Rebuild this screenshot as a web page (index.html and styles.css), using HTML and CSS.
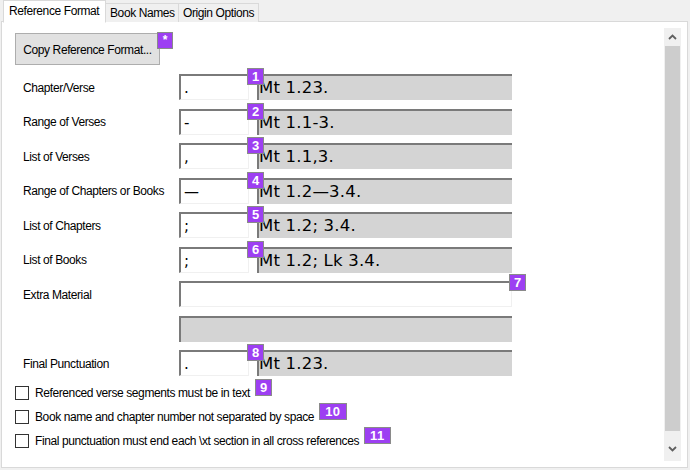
FILE: index.html
```html
<!DOCTYPE html>
<html>
<head>
<meta charset="utf-8">
<link rel="stylesheet" href="styles.css">
</head>
<body>
<div class="window">
  <div class="tabs">
    <div class="tab active">Reference Format</div>
    <div class="tab">Book Names</div>
    <div class="tab">Origin Options</div>
  </div>
  <div class="panel">
    <div class="content">
      <div class="btn-wrap">
        <div class="button">Copy Reference Format...</div>
        <span class="badge badge-star">*</span>
      </div>
      <div class="form">
        <div class="row">
          <div class="label">Chapter/Verse</div>
          <div class="field"><div class="input">.</div><span class="badge">1</span></div>
          <div class="preview">Mt 1.23.</div>
        </div>
        <div class="row">
          <div class="label">Range of Verses</div>
          <div class="field"><div class="input">-</div><span class="badge">2</span></div>
          <div class="preview">Mt 1.1-3.</div>
        </div>
        <div class="row">
          <div class="label">List of Verses</div>
          <div class="field"><div class="input">,</div><span class="badge">3</span></div>
          <div class="preview">Mt 1.1,3.</div>
        </div>
        <div class="row">
          <div class="label">Range of Chapters or Books</div>
          <div class="field"><div class="input">—</div><span class="badge">4</span></div>
          <div class="preview">Mt 1.2—3.4.</div>
        </div>
        <div class="row">
          <div class="label">List of Chapters</div>
          <div class="field"><div class="input">;</div><span class="badge">5</span></div>
          <div class="preview">Mt 1.2; 3.4.</div>
        </div>
        <div class="row">
          <div class="label">List of Books</div>
          <div class="field"><div class="input">;</div><span class="badge">6</span></div>
          <div class="preview">Mt 1.2; Lk 3.4.</div>
        </div>
        <div class="row">
          <div class="label">Extra Material</div>
          <div class="field wide"><div class="input"></div><span class="badge badge-right">7</span></div>
        </div>
        <div class="row">
          <div class="label"></div>
          <div class="preview wide"></div>
        </div>
        <div class="row">
          <div class="label">Final Punctuation</div>
          <div class="field"><div class="input">.</div><span class="badge">8</span></div>
          <div class="preview">Mt 1.23.</div>
        </div>
      </div>
      <div class="checks">
        <div class="check"><span class="box"></span><span class="ctext">Referenced verse segments must be in text</span><span class="badge inline">9</span></div>
        <div class="check"><span class="box"></span><span class="ctext">Book name and chapter number not separated by space</span><span class="badge inline two">10</span></div>
        <div class="check"><span class="box"></span><span class="ctext">Final punctuation must end each \xt section in all cross references</span><span class="badge inline two">11</span></div>
      </div>
    </div>
    <div class="scrollbar">
      <div class="arrow"><svg width="9" height="6" viewBox="0 0 9 6"><polyline points="1,5 4.5,1.5 8,5" fill="none" stroke="#5f5f5f" stroke-width="1.8"/></svg></div>
      <div class="thumb"></div>
      <div class="arrow down"><svg width="9" height="6" viewBox="0 0 9 6"><polyline points="1,1 4.5,4.5 8,1" fill="none" stroke="#5f5f5f" stroke-width="1.8"/></svg></div>
    </div>
  </div>
</div>
</body>
</html>
```
FILE: styles.css
```css
html, body {
  margin: 0;
  padding: 0;
  background: #f0f0f0;
}
body {
  width: 690px;
  height: 470px;
  overflow: hidden;
  font-family: "Liberation Sans", Arial, sans-serif;
  font-size: 12px;
  letter-spacing: -0.4px;
  color: #000;
}
.window {
  display: flex;
  flex-direction: column;
  height: 470px;
}
.tabs {
  display: flex;
  align-items: flex-end;
  height: 22px;
  padding-left: 3px;
  position: relative;
  z-index: 1;
}
.tab {
  box-sizing: border-box;
  height: 19px;
  line-height: 19px;
  padding: 0 0 0 4px;
  border: 1px solid #d9d9d9;
  border-bottom: none;
  background: #f0f0f0;
  white-space: nowrap;
  margin-left: -1px;
}
.tab.active {
  width: 103px;
  height: 23px;
  line-height: 20px;
  padding-left: 5px;
  margin-left: 0;
  margin-bottom: -1px;
  background: #fff;
  border-bottom: 1px solid #fff;
}
.tab:nth-child(2) { width: 74px; }
.tab:nth-child(3) { width: 81px; }
.panel {
  margin: -1px 2px 2px 1px;
  border: 1px solid #d9d9d9;
  background: #fff;
  flex: 1;
  display: flex;
  min-height: 0;
}
.content {
  flex: 1;
  padding: 11px 0 0 13px;
}
.btn-wrap {
  position: relative;
  width: 145px;
  height: 32px;
}
.button {
  box-sizing: border-box;
  width: 145px;
  height: 32px;
  background: #e1e1e1;
  border: 1px solid #adadad;
  display: flex;
  align-items: center;
  justify-content: center;
  padding-top: 1px;
}
.badge {
  position: absolute;
  box-sizing: border-box;
  height: 17px;
  min-width: 17px;
  padding: 0 3px;
  background: #9d3ff2;
  border: 1px solid #8a8a8a;
  color: #fff;
  font-weight: bold;
  font-size: 13px;
  letter-spacing: 0;
  line-height: 15px;
  text-align: center;
  z-index: 2;
}
.badge.two {
  padding: 0 5px;
  letter-spacing: 0.5px;
}
.badge-star {
  left: 142px;
  top: -1px;
  width: 16px;
  min-width: 16px;
  font-size: 12px;
}
.form {
  margin-top: 9px;
  display: flex;
  flex-direction: column;
  gap: 8.5px;
}
.row {
  display: flex;
  align-items: center;
  height: 26px;
}
.label {
  width: 164px;
  padding-left: 8px;
  box-sizing: border-box;
  flex: none;
  padding-top: 1px;
}
.field {
  position: relative;
  width: 70px;
  height: 26px;
  flex: none;
}
.field.wide {
  width: 333px;
}
.input {
  box-sizing: border-box;
  width: 100%;
  height: 26px;
  background: #fff;
  border-top: 2px solid #7a7a7a;
  border-left: 2px solid #7a7a7a;
  border-right: 1px solid #f0f0f0;
  border-bottom: 1px solid #f0f0f0;
  font-family: "DejaVu Sans", Verdana, sans-serif;
  font-size: 15px;
  letter-spacing: 0;
  padding: 2px 0 0 3px;
  line-height: 20px;
}
.field .badge {
  left: 68px;
  top: -6px;
}
.field .badge-right {
  left: 330px;
  top: -7px;
}
.preview {
  box-sizing: border-box;
  width: 255px;
  height: 26px;
  margin-left: 8px;
  flex: none;
  background: #d4d4d4;
  border-top: 2px solid #7a7a7a;
  border-left: 2px solid #7a7a7a;
  font-family: "DejaVu Sans", Verdana, sans-serif;
  font-size: 16.5px;
  letter-spacing: 0.2px;
  line-height: 24px;
  color: #000;
  white-space: nowrap;
}
.preview.wide {
  width: 333px;
  margin-left: 0;
}
.checks {
  margin-top: 5px;
  display: flex;
  flex-direction: column;
}
.check {
  display: flex;
  align-items: center;
  height: 24px;
  position: relative;
  letter-spacing: -0.4px;
}
.box {
  box-sizing: border-box;
  width: 14px;
  height: 14px;
  border: 1px solid #333;
  background: #fff;
  margin-right: 6px;
  flex: none;
}
.badge.inline {
  position: relative;
  top: -6px;
  margin-left: 5px;
}
.scrollbar {
  width: 17px;
  margin: 6px 6px 6px 0;
  background: #f0f0f0;
  display: flex;
  flex-direction: column;
}
.arrow {
  height: 18px;
  display: flex;
  align-items: center;
  justify-content: center;
  flex: none;
}
.arrow.down {
  height: 30px;
  align-items: flex-end;
  padding-bottom: 9px;
  box-sizing: border-box;
}
.thumb {
  flex: 1;
  background: #cdcdcd;
  margin: 0 1px;
}
```
